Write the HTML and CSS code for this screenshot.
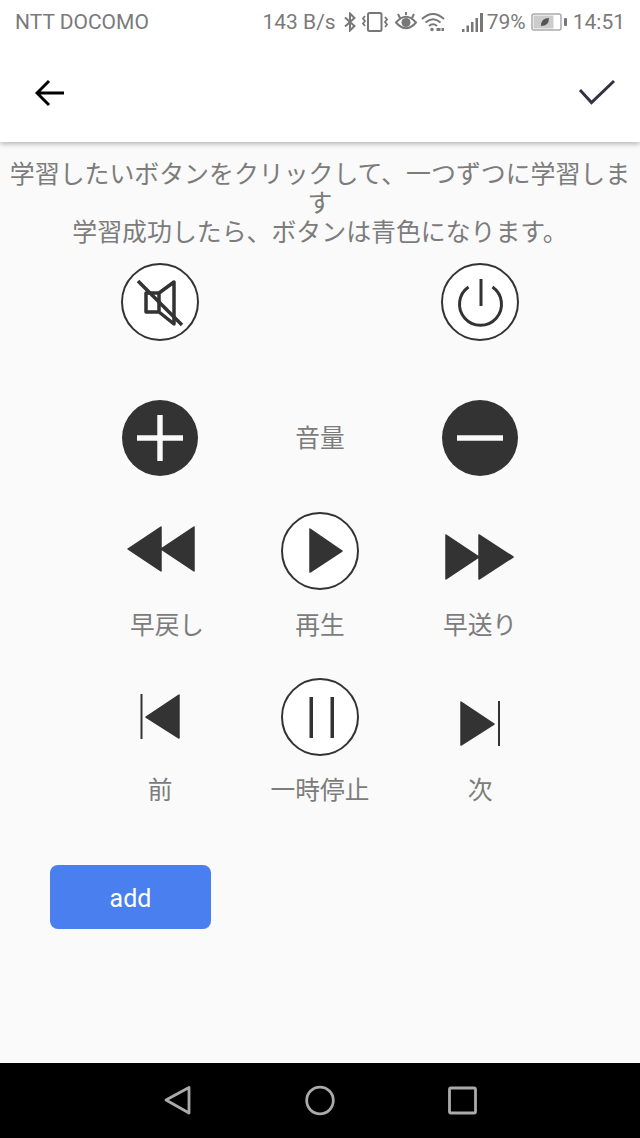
FILE: index.html
```html
<!DOCTYPE html>
<html lang="ja">
<head>
<meta charset="utf-8">
<title>学習</title>
<link rel="stylesheet" href="styles.css">
</head>
<body>
<div class="screen">
  <div class="status">
    <span class="carrier">NTT DOCOMO</span>
    <div class="status-right">
      <span class="speed">143 B/s</span>
      <svg class="st st-bt" viewBox="0 0 14 20"><path d="M2 5.500 11.500 14 7 18.500V1.500L11.500 6 2 14.500" fill="none" stroke="#777" stroke-width="2"/></svg>
      <svg class="st st-vib" viewBox="0 0 26 20"><rect x="6" y="1" width="13.500" height="18" rx="1.500" fill="none" stroke="#777" stroke-width="2"/><path d="M3 4 1 6.500 3 9 1 11.500 3 14M23 5 25 7.500 23 10 25 12.500 23 15" fill="none" stroke="#777" stroke-width="1.800"/></svg>
      <svg class="st st-eye" viewBox="0 0 22 20"><path d="M1 10.500Q11-1 21 10.500 11 22 1 10.500Z" fill="none" stroke="#777" stroke-width="2"/><circle cx="11" cy="10.500" r="4.500" fill="#777"/><path d="M3 2 5 6M19 2 17 6M11 0V3" stroke="#777" stroke-width="2"/></svg>
      <svg class="st st-wifi" viewBox="0 0 24 20"><path d="M1 7Q12-3 23 7M4.500 10.500Q12 4 19.500 10.500M8 14Q12 10.500 16 14" fill="none" stroke="#777" stroke-width="2"/><circle cx="11" cy="17.500" r="1.700" fill="#777"/><path d="M15.500 16H19.500V19H15.500ZM20.500 16H23V19H20.500Z" fill="#777"/></svg>
      <svg class="st st-sig" viewBox="0 0 21 20"><path d="M0 17h2.500v3H0ZM4.500 13.500H7V20H4.500ZM9 10h2.500V20H9ZM13.500 6H16V20H13.500ZM18 1h3V20H18Z" fill="#777"/></svg>
      <span class="pct">79%</span>
      <svg class="st st-bat" viewBox="0 0 36 18"><rect x="1" y="1" width="29" height="16" rx="2" fill="#fff" stroke="#aaa" stroke-width="1.500"/><rect x="2.500" y="2.500" width="20" height="13" fill="#ccc"/><rect x="33" y="5" width="3" height="8" rx="1" fill="#777"/><path d="M10 13Q10 5 18 5 18 13 10 13Z" fill="#555"/></svg>
      <span class="clock">14:51</span>
    </div>
  </div>
  <header class="bar">
    <svg class="bar-back" viewBox="0 0 30 28"><path d="M29 14H3M14 2 2 14 14 26" fill="none" stroke="#000" stroke-width="3"/></svg>
    <svg class="bar-check" viewBox="0 0 38 26"><path d="M2 11 13.500 23.500 36 2" fill="none" stroke="#2f3640" stroke-width="3"/></svg>
  </header>
  <main class="content">
    <p class="intro">学習したいボタンをクリックして、一つずつに学習します<br>学習成功したら、ボタンは青色になります。</p>

    <div class="row row-power">
      <div class="cell">
        <svg class="ico" viewBox="0 0 78 78"><circle class="ring" cx="39" cy="39" r="38"/><path class="ln ln-mute" d="M38 30H25V49H38ZM38 30 53 19V61L38 49Z"/><path class="ln ln-mute" d="M17 18 61 62"/></svg>
      </div>
      <div class="cell"></div>
      <div class="cell">
        <svg class="ico" viewBox="0 0 78 78"><circle class="ring" cx="39" cy="39" r="38"/><path class="ln" d="M27.500 24A21 21 0 1 0 51.500 24M40 16V43"/></svg>
      </div>
    </div>

    <div class="row row-vol">
      <div class="cell">
        <svg class="ico" viewBox="0 0 78 78"><circle class="fill" cx="39" cy="39" r="38"/><path d="M16 36.300H62V41.700H16ZM36.300 16H41.700V62H36.300Z" fill="#fafafa"/></svg>
      </div>
      <div class="cell"><span class="label">音量</span></div>
      <div class="cell">
        <svg class="ico" viewBox="0 0 78 78"><circle class="fill" cx="39" cy="39" r="38"/><path d="M16 36.300H62V41.700H16Z" fill="#fafafa"/></svg>
      </div>
    </div>

    <div class="row row-media">
      <div class="cell">
        <svg class="ico" viewBox="0 0 78 78"><path class="tri" d="M40 15V59L7 37ZM73 15V59L40 37Z"/></svg>
        <span class="label label-rew">早戻し</span>
      </div>
      <div class="cell">
        <svg class="ico" viewBox="0 0 78 78"><circle class="ring" cx="39" cy="39" r="38"/><path class="tri" d="M29 17V60L61 39Z"/></svg>
        <span class="label">再生</span>
      </div>
      <div class="cell">
        <svg class="ico" viewBox="0 0 78 78"><path class="tri" d="M5 23V67L38 45ZM38 23V67L72 45Z"/></svg>
        <span class="label">早送り</span>
      </div>
    </div>

    <div class="row row-skip">
      <div class="cell">
        <svg class="ico" viewBox="0 0 78 78"><path d="M20.500 16V61" stroke="#333" stroke-width="2" fill="none"/><path class="tri" d="M58 17V60L25 39Z"/></svg>
        <span class="label">前</span>
      </div>
      <div class="cell">
        <svg class="ico" viewBox="0 0 78 78"><circle class="ring" cx="39" cy="39" r="38"/><path d="M28.500 19H32V60H28.500ZM49.500 19H53V60H49.500Z" fill="#333"/></svg>
        <span class="label">一時停止</span>
      </div>
      <div class="cell">
        <svg class="ico" viewBox="0 0 78 78"><path class="tri" d="M20 24V67L53 46Z"/><path d="M58 23V68" stroke="#333" stroke-width="2" fill="none"/></svg>
        <span class="label">次</span>
      </div>
    </div>

    <button class="add" type="button">add</button>
  </main>
  <nav class="nav">
    <svg class="nav-ico" viewBox="0 0 32 32"><path d="M4 15 27 2.500V28Z" fill="none" stroke="#aaa" stroke-width="2.800" stroke-linejoin="round"/></svg>
    <svg class="nav-ico" viewBox="0 0 32 32"><circle cx="16" cy="15.500" r="13.300" fill="none" stroke="#aaa" stroke-width="2.800"/></svg>
    <svg class="nav-ico" viewBox="0 0 32 32"><rect x="3.500" y="3" width="26" height="25" rx="1.500" fill="none" stroke="#aaa" stroke-width="2.800"/></svg>
  </nav>
</div>
</body>
</html>
```

FILE: styles.css
```css
* { box-sizing: border-box; }
html, body { margin: 0; padding: 0; }
body { font-family: Roboto, "Noto Sans CJK JP", sans-serif; }

.screen {
  width: 640px;
  height: 1138px;
  display: flex;
  flex-direction: column;
  background: #fafafa;
  overflow: hidden;
}

.status {
  height: 44px;
  flex: none;
  display: flex;
  align-items: center;
  justify-content: space-between;
  padding: 0 15px;
  background: #fff;
  color: #7a7a7a;
  font-size: 21px;
  position: relative;
  z-index: 1;
}
.status-right { display: flex; align-items: center; }
.st { display: block; flex: none; }
.st-bt { width: 14px; height: 20px; margin-left: 7px; }
.st-vib { width: 26px; height: 20px; margin-left: 5px; }
.st-eye { width: 22px; height: 20px; margin-left: 7px; }
.st-wifi { width: 24px; height: 20px; margin-left: 4px; }
.st-sig { width: 21px; height: 20px; margin-left: 17px; }
.pct { margin-left: 4px; }
.st-bat { width: 36px; height: 18px; margin-left: 5px; }
.clock { margin-left: 6px; }

.bar {
  height: 98px;
  flex: none;
  display: flex;
  align-items: center;
  justify-content: space-between;
  padding: 0 24px 0 35px;
  background: #fff;
  box-shadow: 0 2px 5px rgba(0, 0, 0, .28);
  position: relative;
}
.bar-back { width: 30px; height: 28px; display: block; }
.bar-check { width: 38px; height: 26px; display: block; margin-top: -2px; }

.content {
  flex: 1;
  min-height: 0;
  display: flex;
  flex-direction: column;
}
.intro {
  margin: 18px 0 16px;
  padding: 0 5px;
  text-align: center;
  font-size: 24.9px;
  line-height: 29px;
  color: #7c7c7c;
}

.row {
  display: grid;
  grid-template-columns: repeat(3, 160px);
  justify-content: center;
}
.row-vol { margin-top: 58px; }
.row-media { margin-top: 35px; }
.row-skip { margin-top: 38px; }
.cell {
  display: flex;
  flex-direction: column;
  align-items: center;
  justify-content: center;
}
.ico { width: 78px; height: 78px; display: block; }
.ring { fill: #fff; stroke: #333; stroke-width: 2; }
.fill { fill: #333; }
.ln { fill: none; stroke: #333; stroke-width: 3; stroke-linejoin: round; }
.ln-mute { stroke-width: 3.500; }
.tri { fill: #333; stroke: #333; stroke-width: 1.500; stroke-linejoin: round; }

.label {
  font-size: 24.7px;
  line-height: 29px;
  color: #7c7c7c;
  white-space: nowrap;
}
.row-media .label { margin-top: 21px; }
.row-skip .label { margin-top: 20px; }
.label-rew { margin-left: 14px; }

.add {
  align-self: flex-start;
  width: 161px;
  height: 64px;
  margin: 60px 0 0 50px;
  padding: 2px 0 0;
  border: 0;
  border-radius: 8px;
  background: #4a7ff0;
  color: #fff;
  font: 400 25px Roboto, sans-serif;
}

.nav {
  height: 75px;
  flex: none;
  display: flex;
  align-items: center;
  justify-content: center;
  gap: 110px;
  background: #000;
}
.nav-ico { width: 32px; height: 32px; display: block; }
```
